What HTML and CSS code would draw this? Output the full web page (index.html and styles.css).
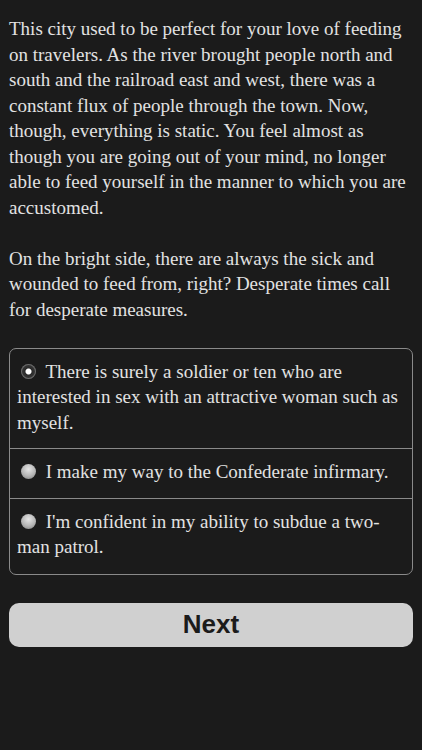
FILE: index.html
```html
<!DOCTYPE html>
<html lang="en">
<head>
    <meta charset="UTF-8">
    <meta name="viewport" content="width=device-width, initial-scale=1.0">
    <title>Choice</title>
    <link rel="stylesheet" href="styles.css">
</head>
<body>
    <div class="page">
        <div class="story">
            <p>This city used to be perfect for your love of feeding on travelers. As the river brought people north and south and the railroad east and west, there was a constant flux of people through the town. Now, though, everything is static. You feel almost as though you are going out of your mind, no longer able to feed yourself in the manner to which you are accustomed.</p>
            <p>On the bright side, there are always the sick and wounded to feed from, right? Desperate times call for desperate measures.</p>
        </div>

        <form class="choices">
            <label class="choice">
                <input type="radio" name="choice" value="0" checked>
                <span class="radio"></span>
                There is surely a soldier or ten who are interested in sex with an attractive woman such as myself.
            </label>
            <label class="choice">
                <input type="radio" name="choice" value="1">
                <span class="radio"></span>
                I make my way to the Confederate infirmary.
            </label>
            <label class="choice">
                <input type="radio" name="choice" value="2">
                <span class="radio"></span>
                I'm confident in my ability to subdue a two-man patrol.
            </label>
        </form>

        <button type="button" class="next-button">Next</button>
    </div>
</body>
</html>
```

FILE: styles.css
```css
* {
    margin: 0;
    padding: 0;
    box-sizing: border-box;
}

html, body {
    background-color: #1b1b1b;
}

body {
    font-family: 'Liberation Serif', 'DejaVu Serif', serif;
    color: #e2e2e2;
}

.page {
    padding: 16px 9px 20px 9px;
}

.story p {
    font-size: 19px;
    line-height: 25.5px;
    margin-bottom: 25.5px;
}

.choices {
    border: 1px solid #8a8a8a;
    border-radius: 7px;
    margin-top: 2px;
}

.choice {
    display: block;
    font-size: 19px;
    line-height: 25.5px;
    padding: 10px 7px 13px 7px;
    border-bottom: 1px solid #8a8a8a;
    cursor: pointer;
}

.choice:last-child {
    border-bottom: none;
    padding-bottom: 14px;
}

.choice input {
    display: none;
}

.radio {
    display: inline-block;
    width: 15px;
    height: 15px;
    border-radius: 50%;
    margin: 0 5px 0 4px;
    vertical-align: -1px;
    background: radial-gradient(circle at 50% 35%, #e6e6e6 0%, #b5b5b5 55%, #7a7a7a 100%);
}

.choice input:checked + .radio {
    background: radial-gradient(circle, #ffffff 0 2.5px, #2a2a2a 3.5px, #4a4a4a 100%);
    box-shadow: inset 0 0 0 1px #6a6a6a;
}

.next-button {
    display: block;
    width: 100%;
    height: 44px;
    margin-top: 28px;
    background-color: #d0d0d0;
    color: #1b1b1b;
    border: none;
    border-radius: 10px;
    font-family: 'Liberation Sans', Arial, sans-serif;
    font-size: 26px;
    font-weight: bold;
    cursor: pointer;
}
```
